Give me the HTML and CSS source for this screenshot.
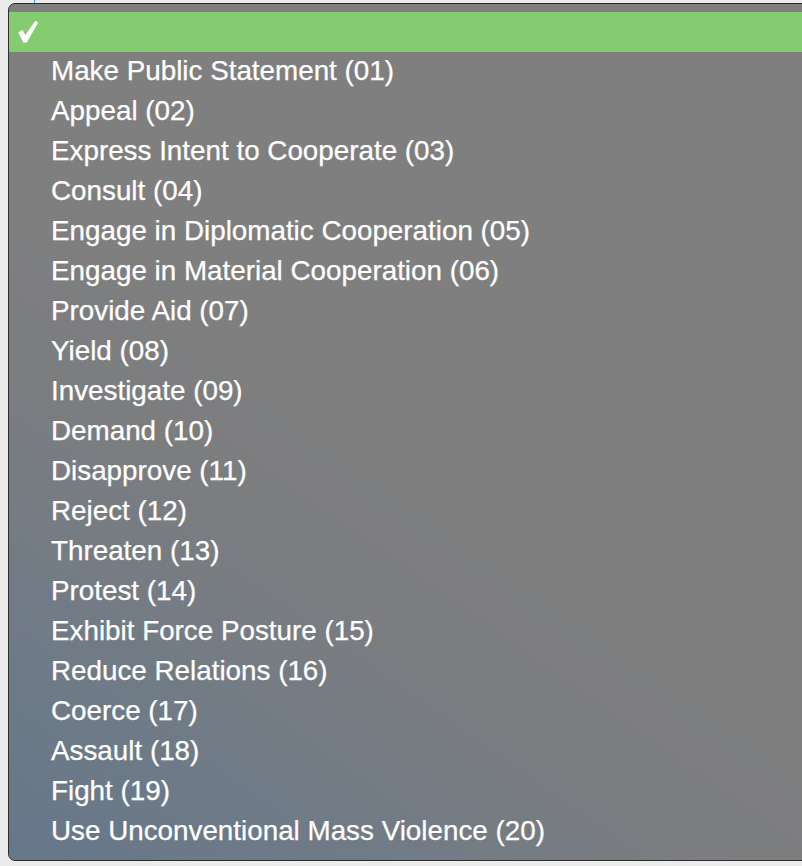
FILE: index.html
```html
<!DOCTYPE html>
<html>
<head>
<meta charset="utf-8">
<link rel="stylesheet" href="styles.css">
</head>
<body>
<div class="page">
  <div class="topline"></div>
  <div class="menu">
    <div class="row selected">
      <svg class="check" width="40" height="40" viewBox="0 0 40 40">
        <path d="M9.2 20.6 L13.4 17.8 L16.4 23 L26.4 8.8 L29.2 10.6 L17.8 30.4 L14.4 30.4 Z" fill="#ffffff"/>
      </svg>
    </div>
    <div class="row">Make Public Statement (01)</div>
    <div class="row">Appeal (02)</div>
    <div class="row">Express Intent to Cooperate (03)</div>
    <div class="row">Consult (04)</div>
    <div class="row">Engage in Diplomatic Cooperation (05)</div>
    <div class="row">Engage in Material Cooperation (06)</div>
    <div class="row">Provide Aid (07)</div>
    <div class="row">Yield (08)</div>
    <div class="row">Investigate (09)</div>
    <div class="row">Demand (10)</div>
    <div class="row">Disapprove (11)</div>
    <div class="row">Reject (12)</div>
    <div class="row">Threaten (13)</div>
    <div class="row">Protest (14)</div>
    <div class="row">Exhibit Force Posture (15)</div>
    <div class="row">Reduce Relations (16)</div>
    <div class="row">Coerce (17)</div>
    <div class="row">Assault (18)</div>
    <div class="row">Fight (19)</div>
    <div class="row">Use Unconventional Mass Violence (20)</div>
  </div>
</div>
</body>
</html>
```
FILE: styles.css
```css
html, body {
  margin: 0;
  padding: 0;
  background: #ececec;
  overflow: hidden;
}
.page {
  position: relative;
  width: 802px;
  height: 866px;
  padding: 3px 0 0 8px;
  box-sizing: border-box;
}
.topline {
  position: absolute;
  left: 34px;
  top: 0;
  width: 1px;
  height: 3px;
  background: #4a8fe0;
}
.menu {
  width: 820px;
  height: 858px;
  box-sizing: border-box;
  border: 1px solid #2e2e2e;
  border-radius: 7px;
  padding-top: 8px;
  background:
    linear-gradient(35deg, #66778a 0%, #707b86 18%, #7c7d7f 36%, #7f7f7f 50%, #7f7f7f 100%);
  font-family: "Liberation Sans", Arial, sans-serif;
  font-size: 27.8px;
  color: #ffffff;
  -webkit-text-stroke: 0.25px #ffffff;
  overflow: hidden;
}
.row {
  height: 40px;
  line-height: 38px;
  padding-left: 42px;
  white-space: nowrap;
}
.row.selected {
  position: relative;
  background: #85cb6f;
}
.check {
  position: absolute;
  left: 0;
  top: 0;
}
```
